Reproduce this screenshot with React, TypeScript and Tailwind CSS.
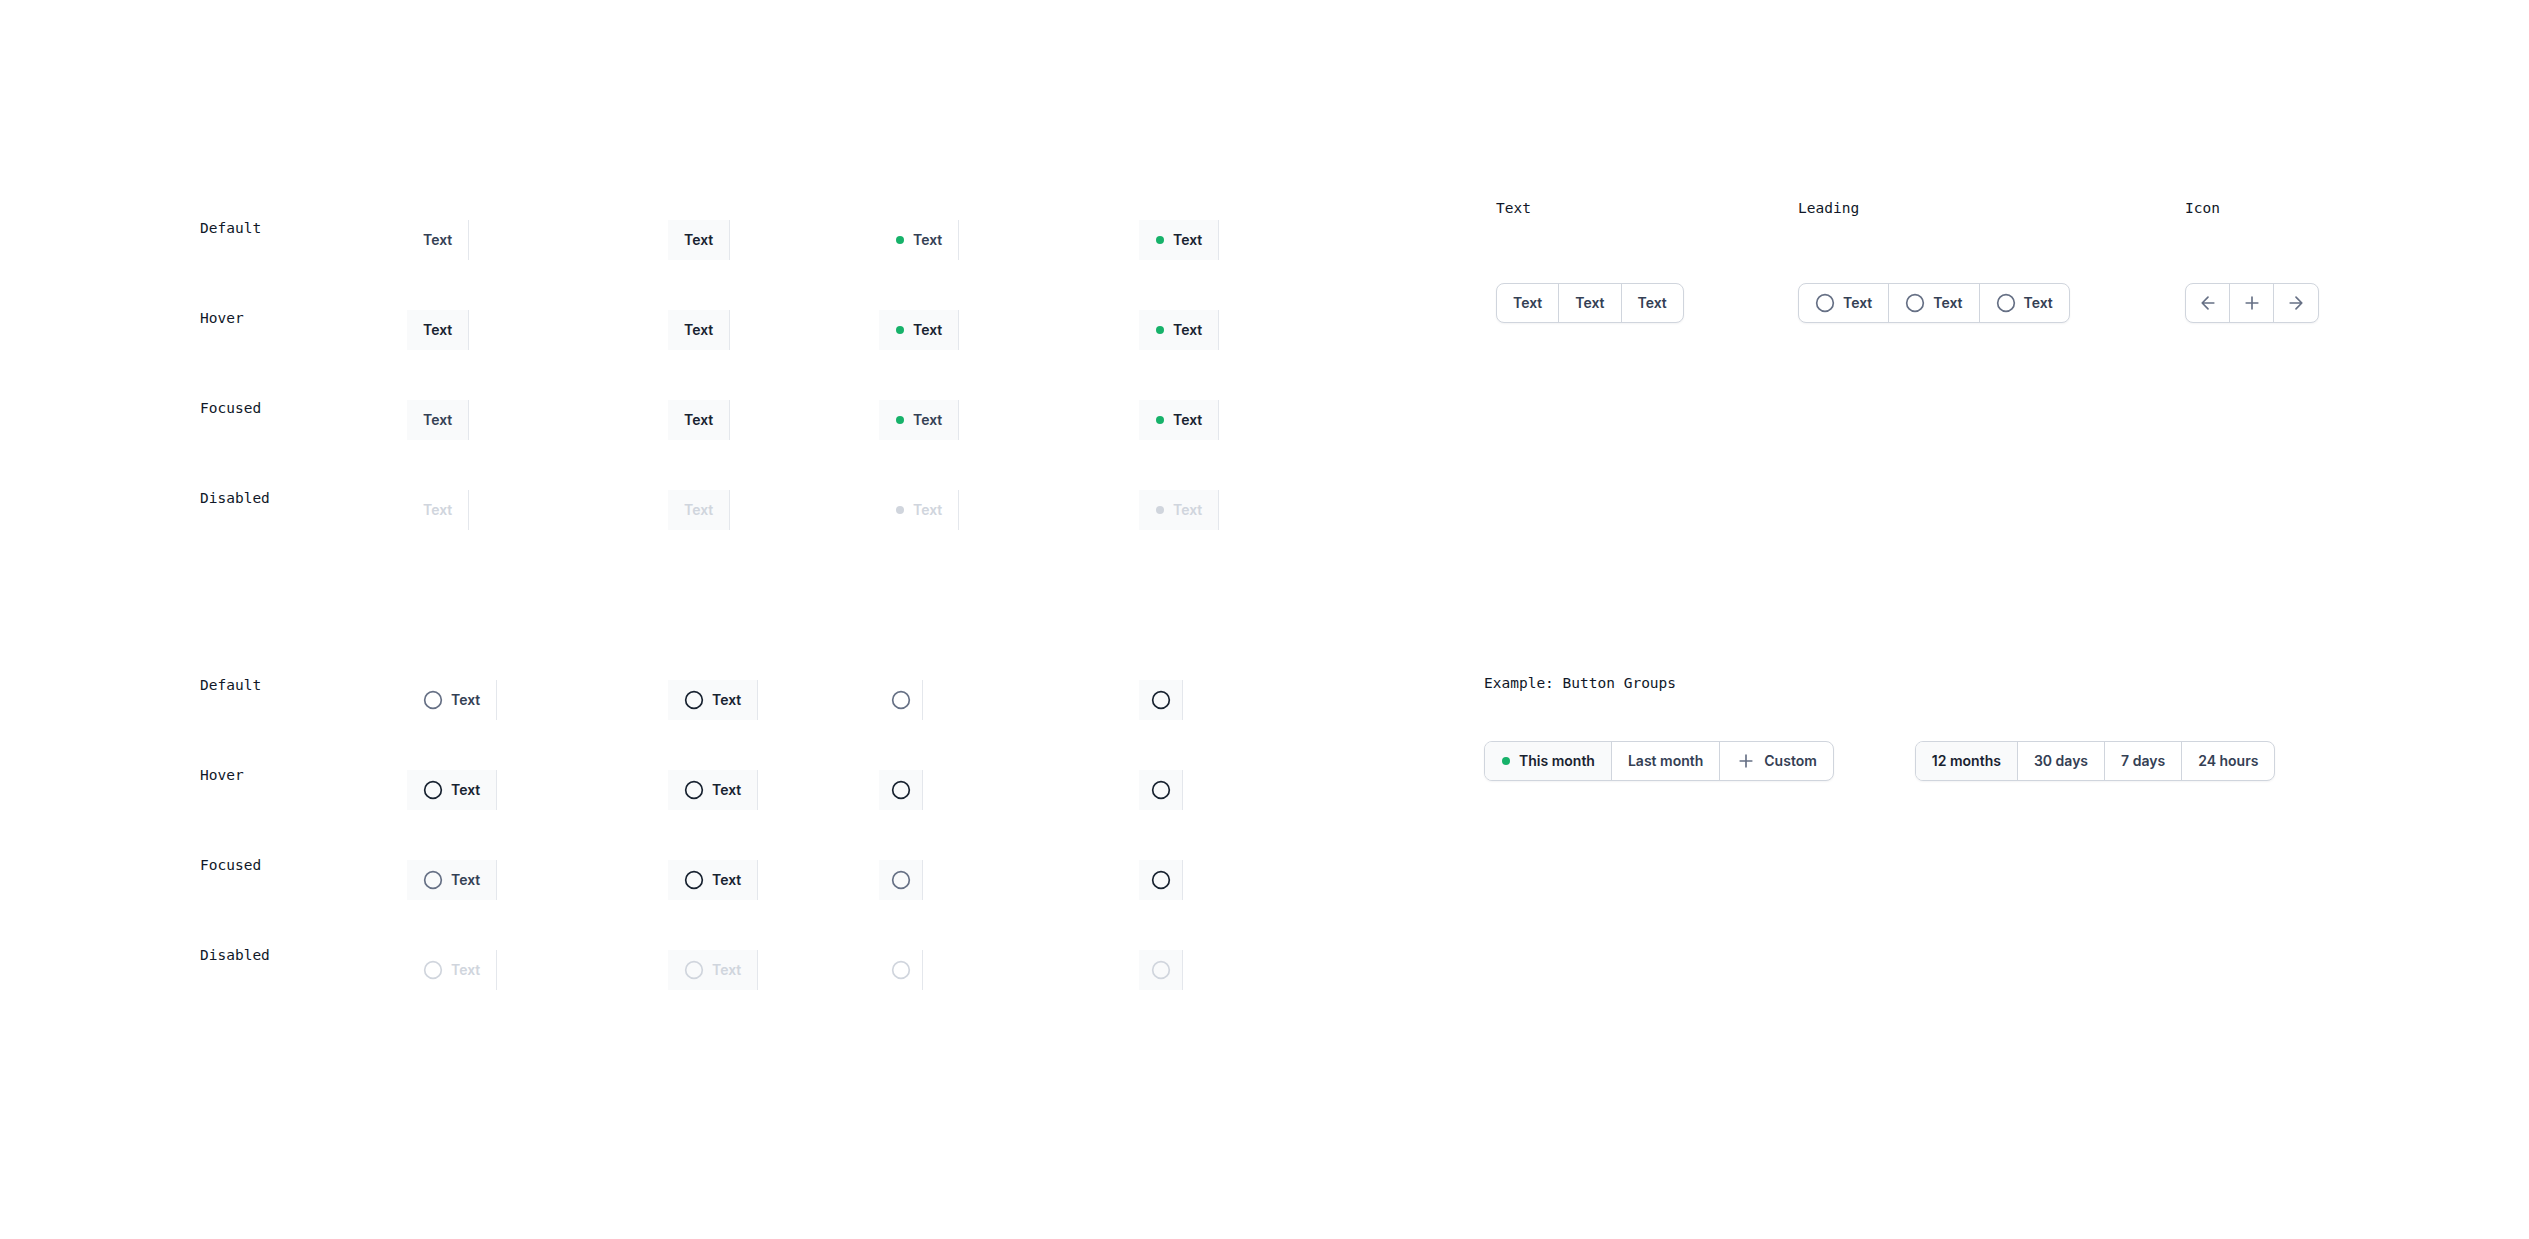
import React from 'react';

type State = 'default' | 'hover' | 'focused' | 'disabled';
type Kind = 'text' | 'dot' | 'leading' | 'icon';

const STATES: { key: State; label: string }[] = [
  { key: 'default', label: 'Default' },
  { key: 'hover', label: 'Hover' },
  { key: 'focused', label: 'Focused' },
  { key: 'disabled', label: 'Disabled' },
];

const mono = { fontFamily: '"DejaVu Sans Mono", "Liberation Mono", monospace' };
const sans = { fontFamily: 'Inter, "Noto Sans", sans-serif' };

const CircleIcon: React.FC<{ className?: string }> = ({ className }) => (
  <svg width="20" height="20" viewBox="0 0 20 20" fill="none" className={className}>
    <circle cx="10" cy="10" r="8.33" stroke="currentColor" strokeWidth="1.67" />
  </svg>
);

const ArrowLeft = () => (
  <svg width="20" height="20" viewBox="0 0 20 20" fill="none">
    <path d="M15.83 10H4.17M4.17 10L10 15.83M4.17 10L10 4.17" stroke="currentColor" strokeWidth="1.67" strokeLinecap="round" strokeLinejoin="round" />
  </svg>
);

const ArrowRight = () => (
  <svg width="20" height="20" viewBox="0 0 20 20" fill="none">
    <path d="M4.17 10H15.83M15.83 10L10 4.17M15.83 10L10 15.83" stroke="currentColor" strokeWidth="1.67" strokeLinecap="round" strokeLinejoin="round" />
  </svg>
);

const PlusIcon = () => (
  <svg width="20" height="20" viewBox="0 0 20 20" fill="none">
    <path d="M10 4.17V15.83M4.17 10H15.83" stroke="currentColor" strokeWidth="1.67" strokeLinecap="round" strokeLinejoin="round" />
  </svg>
);

const Dot: React.FC<{ muted?: boolean }> = ({ muted }) => (
  <span className="flex size-2.5 items-center justify-center">
    <span className={`size-2 rounded-full ${muted ? 'bg-[#D0D5DD]' : 'bg-[#17B26A]'}`} />
  </span>
);

const StateButton: React.FC<{ kind: Kind; state: State; current: boolean }> = ({ kind, state, current }) => {
  const disabled = state === 'disabled';
  const strong = current || state === 'hover';
  const bg = current || state === 'hover' || state === 'focused' ? 'bg-[#F9FAFB]' : 'bg-white';
  const text = disabled ? 'text-[#D0D5DD]' : strong ? 'text-[#182230]' : 'text-[#344054]';
  const icon = disabled ? 'text-[#D0D5DD]' : strong ? 'text-[#182230]' : 'text-[#667085]';

  return (
    <div
      className={`flex h-10 items-center gap-2 border-r border-[#E4E7EC] text-sm leading-5 font-semibold ${bg} ${text} ${
        kind === 'icon' ? 'w-[44px] justify-center' : 'px-4'
      }`}
      style={sans}
    >
      {kind === 'dot' && <Dot muted={disabled} />}
      {(kind === 'leading' || kind === 'icon') && <CircleIcon className={icon} />}
      {kind !== 'icon' && <span>Text</span>}
    </div>
  );
};

const StateGrid: React.FC<{ kinds: [Kind, Kind]; labelOffset: string }> = ({ kinds, labelOffset }) => {
  const cols: { kind: Kind; current: boolean; width: string }[] = [
    { kind: kinds[0], current: false, width: 'w-[261px]' },
    { kind: kinds[0], current: true, width: 'w-[211px]' },
    { kind: kinds[1], current: false, width: 'w-[260px]' },
    { kind: kinds[1], current: true, width: 'w-[80px]' },
  ];
  return (
    <div className="flex flex-col gap-[50px]">
      {STATES.map(s => (
        <div key={s.key} className="flex items-start">
          <div className={`w-[207px] text-[14.5px] leading-5 text-[#101828] ${labelOffset}`} style={mono}>
            {s.label}
          </div>
          {cols.map((c, i) => (
            <div key={i} className={`flex ${c.width}`}>
              <StateButton kind={c.kind} state={s.key} current={c.current} />
            </div>
          ))}
        </div>
      ))}
    </div>
  );
};

const Group: React.FC<{ children: React.ReactNode }> = ({ children }) => (
  <div
    className="flex h-10 overflow-hidden rounded-lg border border-[#D0D5DD] bg-white text-sm leading-5 font-semibold text-[#344054] shadow-[0_1px_2px_rgba(16,24,40,0.05)] divide-x divide-[#D0D5DD]"
    style={sans}
  >
    {children}
  </div>
);

const Seg: React.FC<{ children: React.ReactNode; active?: boolean; icon?: boolean }> = ({ children, active, icon }) => (
  <div
    className={`flex items-center gap-2 ${icon ? 'w-[44px] justify-center text-[#667085]' : 'px-4'} ${
      active ? 'bg-[#F9FAFB] text-[#182230]' : ''
    }`}
  >
    {children}
  </div>
);

export default function App() {
  return (
    <div className="flex min-h-screen w-full bg-white">
      <div className="w-[1484px] shrink-0 pl-[200px] pt-[220px]">
        <StateGrid kinds={['text', 'dot']} labelOffset="-mt-0.5" />
        <div className="mt-[150px]">
          <StateGrid kinds={['leading', 'icon']} labelOffset="-mt-[5px]" />
        </div>
      </div>

      <div className="flex flex-col pt-[198px]">
        <div className="flex pl-3">
          <div className="w-[302px]">
            <div className="text-[14.5px] leading-5 text-[#101828]" style={mono}>Text</div>
            <div className="mt-[65px] flex">
              <Group>
                <Seg>Text</Seg>
                <Seg>Text</Seg>
                <Seg>Text</Seg>
              </Group>
            </div>
          </div>
          <div className="w-[387px]">
            <div className="text-[14.5px] leading-5 text-[#101828]" style={mono}>Leading</div>
            <div className="mt-[65px] flex">
              <Group>
                {[0, 1, 2].map(i => (
                  <Seg key={i}>
                    <CircleIcon className="text-[#667085]" />
                    <span>Text</span>
                  </Seg>
                ))}
              </Group>
            </div>
          </div>
          <div>
            <div className="text-[14.5px] leading-5 text-[#101828]" style={mono}>Icon</div>
            <div className="mt-[65px] flex">
              <Group>
                <Seg icon><ArrowLeft /></Seg>
                <Seg icon><PlusIcon /></Seg>
                <Seg icon><ArrowRight /></Seg>
              </Group>
            </div>
          </div>
        </div>

        <div className="mt-[350px]">
          <div className="text-[14.5px] leading-5 text-[#101828]" style={mono}>Example: Button Groups</div>
          <div className="mt-12 flex gap-[81px]">
            <Group>
              <Seg active>
                <Dot />
                <span>This month</span>
              </Seg>
              <Seg>Last month</Seg>
              <Seg>
                <span className="text-[#667085]"><PlusIcon /></span>
                <span>Custom</span>
              </Seg>
            </Group>
            <Group>
              <Seg active>12 months</Seg>
              <Seg>30 days</Seg>
              <Seg>7 days</Seg>
              <Seg>24 hours</Seg>
            </Group>
          </div>
        </div>
      </div>
    </div>
  );
}
